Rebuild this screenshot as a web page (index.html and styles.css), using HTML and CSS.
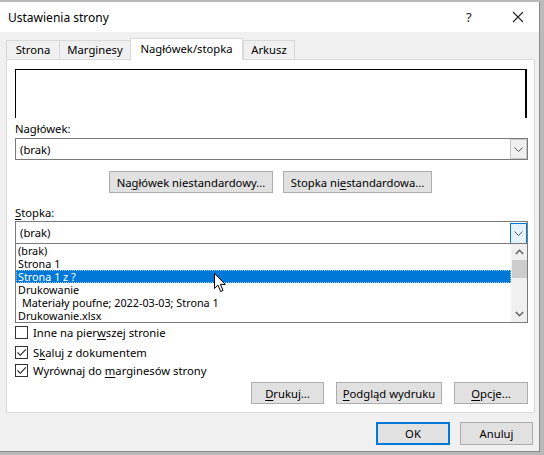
FILE: index.html
```html
<!DOCTYPE html>
<html lang="pl">
<head>
  <meta charset="UTF-8" />
  <meta name="viewport" content="width=device-width, initial-scale=1.0" />
  <title>Ustawienia strony</title>
  <link rel="stylesheet" href="styles.css">
</head>
<body>

<div class="dialog">

  <!-- Title bar -->
  <div class="titlebar">
    <span class="title">Ustawienia strony</span>
    <span class="help">?</span>
    <span class="close">
      <svg width="12" height="12" viewBox="0 0 12 12"><path d="M1 1 L11 11 M11 1 L1 11" stroke="#222" stroke-width="1.1" fill="none"/></svg>
    </span>
  </div>

  <div class="body">

    <!-- Tabs -->
    <div class="tabs">
      <div class="tab tab-strona">Strona</div>
      <div class="tab tab-marg">Marginesy</div>
      <div class="tab tab-active">Nagłówek/stopka</div>
      <div class="tab tab-ark">Arkusz</div>
    </div>

    <!-- Tab panel -->
    <div class="panel">
      <div class="preview"></div>

      <div class="label label-top">Nagłówek:</div>
      <div class="combo">
        <span class="combo-text">(brak)</span>
        <span class="drop">
          <svg width="9" height="5" viewBox="0 0 9 5"><path d="M0.5 0.5 L4.5 4.5 L8.5 0.5" stroke="#555" fill="none"/></svg>
        </span>
      </div>

      <div class="custom-row">
        <button class="btn btn-header">Na<u>g</u>łówek niestandardowy...</button>
        <button class="btn btn-footer">Stopka ni<u>e</u>standardowa...</button>
      </div>

      <div class="label label-footer"><u>S</u>topka:</div>
      <div class="combo combo-open">
        <span class="combo-text">(brak)</span>
        <span class="drop drop-hot">
          <svg width="9" height="5" viewBox="0 0 9 5"><path d="M0.5 0.5 L4.5 4.5 L8.5 0.5" stroke="#555" fill="none"/></svg>
        </span>
      </div>

      <div class="listbox">
        <div class="items">
          <div class="item">(brak)</div>
          <div class="item">Strona 1</div>
          <div class="item selected">Strona 1 z ?</div>
          <div class="item">Drukowanie</div>
          <div class="item indent">Materiały poufne; 2022-03-03; Strona 1</div>
          <div class="item">Drukowanie.xlsx</div>
        </div>
        <div class="scrollbar">
          <svg class="arrow" width="9" height="6" viewBox="0 0 9 6"><path d="M0.8 5 L4.5 1.2 L8.2 5" stroke="#606060" stroke-width="1.4" fill="none"/></svg>
          <div class="thumb"></div>
          <div class="track"></div>
          <svg class="arrow" width="9" height="6" viewBox="0 0 9 6"><path d="M0.8 1 L4.5 4.8 L8.2 1" stroke="#606060" stroke-width="1.4" fill="none"/></svg>
        </div>
        <svg class="cursor" width="13" height="20" viewBox="0 0 13 20">
          <path d="M0.5 0.5 L0.5 15.5 L4 12.2 L6.6 18.5 L9 17.5 L6.4 11.4 L11.3 11.4 Z" fill="#fff" stroke="#000" stroke-width="1"/>
        </svg>
      </div>

      <div class="check-row first">
        <span class="box"></span>
        <span>Inne na pier<u>w</u>szej stronie</span>
      </div>
      <div class="check-row second">
        <span class="box">
          <svg width="11" height="11" viewBox="0 0 11 11"><path d="M1.5 5.5 L4.3 8.3 L9.8 2.3" stroke="#222" stroke-width="1.1" fill="none"/></svg>
        </span>
        <span>S<u>k</u>aluj z dokumentem</span>
      </div>
      <div class="check-row third">
        <span class="box">
          <svg width="11" height="11" viewBox="0 0 11 11"><path d="M1.5 5.5 L4.3 8.3 L9.8 2.3" stroke="#222" stroke-width="1.1" fill="none"/></svg>
        </span>
        <span>Wyrównaj do <u>m</u>arginesów strony</span>
      </div>

      <div class="action-row">
        <button class="btn btn-print"><u>D</u>rukuj...</button>
        <button class="btn btn-preview"><u>P</u>odgląd wydruku</button>
        <button class="btn btn-options"><u>O</u>pcje...</button>
      </div>
    </div>

    <!-- OK / Cancel -->
    <div class="footer">
      <button class="btn btn-ok">OK</button>
      <button class="btn btn-cancel">Anuluj</button>
    </div>

  </div>
</div>

</body>
</html>
```

FILE: styles.css
```css
body {
  margin: 0;
  height: 455px;
  overflow: hidden;
  background: #b9b9b9;
  font-family: "Noto Sans", "DejaVu Sans", sans-serif;
  font-size: 11.25px;
  color: #000;
}

u {
  text-decoration-thickness: 1px;
  text-underline-offset: 2px;
}

.dialog {
  width: 539px;
  height: 449px;
  margin-top: 2px;
  border-right: 1px solid #8a8a8a;
  border-bottom: 1px solid #8a8a8a;
  background: #f0f0f0;
}

/* title bar */
.titlebar {
  height: 30px;
  background: #fff;
  display: flex;
  align-items: center;
}

.title {
  padding-left: 8px;
  flex: 1;
  font-size: 12px;
}

.help {
  width: 12px;
  margin-right: 34px;
  font-size: 13px;
  color: #222;
}

.close {
  display: flex;
  margin-right: 15px;
}

/* tabs */
.body {
  padding: 8px 0 0 6px;
}

.tabs {
  display: flex;
  align-items: flex-end;
  height: 19px;
  position: relative;
  z-index: 1;
}

.tab {
  height: 18px;
  line-height: 18px;
  border: 1px solid #d9d9d9;
  border-bottom: none;
  background: #f0f0f0;
  text-align: center;
  margin-right: -1px;
}

.tab-strona { width: 52px; }
.tab-marg { width: 70px; }
.tab-ark { width: 50px; }

.tab-active {
  width: 111px;
  height: 21px;
  line-height: 19px;
  background: #fff;
  margin-bottom: -1px;
  margin-right: 0;
}

.panel {
  width: 513px;
  height: 343px;
  border: 1px solid #d9d9d9;
  background: #fff;
  padding: 9px 6px 0 8px;
}

.preview {
  width: 509px;
  height: 48px;
  border-top: 1px solid #000;
  border-left: 1px solid #000;
  border-right: 2px solid #000;
}

.label {
  line-height: 16px;
}

.label-top {
  height: 16px;
  padding-top: 3px;
  margin-bottom: 1px;
}

.label-footer {
  height: 16px;
  padding-top: 12px;
}

/* combo boxes */
.combo {
  height: 20px;
  border: 1px solid #7a7a7a;
  display: flex;
  align-items: center;
  justify-content: space-between;
}

.combo-text {
  padding-left: 4px;
}

.drop {
  width: 15px;
  height: 18px;
  border: 1px solid #c8c8c8;
  background: #f0f0f0;
  display: flex;
  align-items: center;
  justify-content: center;
}

.drop-hot {
  border-color: #0078d7;
  background: #e5f1fb;
  height: 19px;
  margin-bottom: -1px;
}

.combo-open {
  border-bottom: none;
  height: 21px;
}

.custom-row {
  display: flex;
  gap: 10px;
  margin-top: 11px;
  padding-left: 94px;
}

.btn {
  height: 22px;
  padding: 0;
  border: 1px solid #adadad;
  background: #e1e1e1;
  font-family: inherit;
  font-size: 11.25px;
  color: #000;
}

.btn-header { width: 164px; }
.btn-footer { width: 149px; }

/* footer list */
.listbox {
  position: relative;
  height: 78px;
  border: 1px solid #7a7a7a;
  display: flex;
}

.items {
  flex: 1;
}

.item {
  height: 13px;
  line-height: 13px;
  font-size: 10.8px;
  padding-left: 2px;
  white-space: nowrap;
}

.item.indent {
  padding-left: 6px;
}

.item.selected {
  background: #0078d7;
  color: #fff;
  outline: 1px dotted #9ec9ef;
  outline-offset: -1px;
}

.scrollbar {
  width: 16px;
  background: #f0f0f0;
  display: flex;
  flex-direction: column;
  align-items: center;
}

.arrow {
  margin: 5px 0;
}

.thumb {
  width: 15px;
  height: 18px;
  background: #cdcdcd;
}

.track {
  flex: 1;
}

.cursor {
  position: absolute;
  left: 198px;
  top: 29px;
}

/* checkboxes */
.check-row {
  display: flex;
  align-items: center;
  gap: 5px;
  height: 13px;
}

.check-row.first { margin-top: 3px; }
.check-row.second { margin-top: 7px; }
.check-row.third { margin-top: 5px; }

.box {
  width: 11px;
  height: 11px;
  border: 1px solid #333;
  display: flex;
  align-items: center;
  justify-content: center;
}

.action-row {
  display: flex;
  justify-content: flex-end;
  gap: 12px;
  margin-top: 5px;
}

.btn-print { width: 73px; }
.btn-preview { width: 106px; }
.btn-options { width: 74px; }

.footer {
  display: flex;
  justify-content: flex-end;
  gap: 10px;
  margin-top: 9px;
  padding-right: 6px;
}

.btn-ok {
  width: 74px;
  height: 23px;
  border: 2px solid #0078d7;
}

.btn-cancel {
  width: 73px;
  height: 23px;
}
```
